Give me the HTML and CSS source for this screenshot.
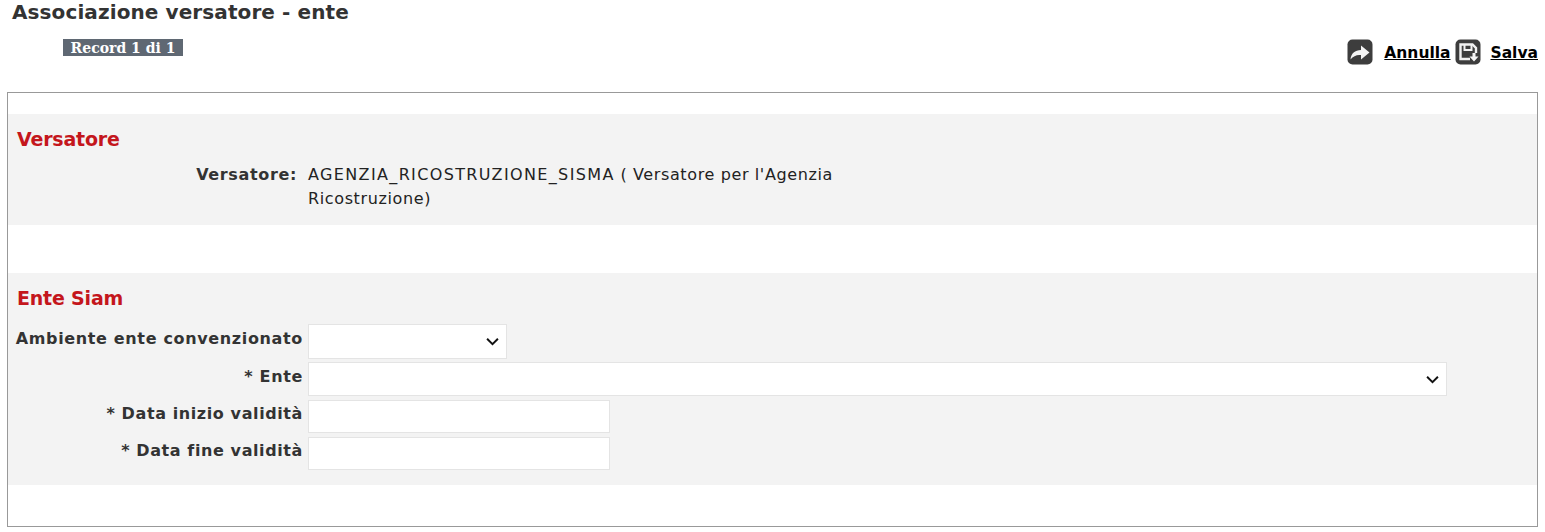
FILE: index.html
```html
<!DOCTYPE html>
<html lang="it">
<head>
<meta charset="utf-8">
<title>Associazione versatore - ente</title>
<link rel="stylesheet" href="styles.css">
</head>
<body>
<header class="top">
  <h1 class="title">Associazione versatore - ente</h1>
  <div class="bar">
    <span class="badge">Record 1 di 1</span>
    <nav class="actions">
      <svg class="icon" viewBox="0 0 26 26" aria-hidden="true"><rect x="0.5" y="0.5" width="25" height="25" rx="5" fill="#3d3d3d"/><path d="M3.5 20.5c.5-6 4.500-9.500 10.500-9.500V6.500l8.500 7-8.500 7V16c-4.500-.5-7.500 1-10.500 4.500z" fill="#f4f4f4"/></svg>
      <a class="link link-first" href="#">Annulla</a>
      <svg class="icon" viewBox="0 0 26 26" aria-hidden="true"><rect x="0.5" y="0.5" width="25" height="25" rx="5" fill="#3d3d3d"/><path d="M15 20H5.500V5.500h12l3.500 3.500v5" fill="none" stroke="#f1f1f1" stroke-width="2.400"/><path d="M9.500 5.500v5.500h7V5.500" fill="none" stroke="#f1f1f1" stroke-width="2"/><path d="M17.500 14h3v3.500H23.500l-4.500 5-4.500-5h3z" fill="#f4f4f4"/></svg>
      <a class="link" href="#">Salva</a>
    </nav>
  </div>
</header>
<main class="panel">
  <section class="group group-one">
    <h2 class="group-title">Versatore</h2>
    <div class="info">
      <span class="info-label">Versatore:</span>
      <span class="info-value"><span class="code">AGENZIA_RICOSTRUZIONE_SISMA</span> ( Versatore per l'Agenzia Ricostruzione)</span>
    </div>
  </section>
  <section class="group group-two">
    <h2 class="group-title">Ente Siam</h2>
    <div class="row row-first">
      <label class="label label-low">Ambiente ente convenzionato</label>
      <div class="field select-short"><svg class="chev" viewBox="0 0 12 8" aria-hidden="true"><path d="M1 1.500l5 5 5-5" fill="none" stroke="#111" stroke-width="1.800"/></svg></div>
    </div>
    <div class="row row-second">
      <label class="label label-low">* Ente</label>
      <div class="field select-long"><svg class="chev" viewBox="0 0 12 8" aria-hidden="true"><path d="M1 1.500l5 5 5-5" fill="none" stroke="#111" stroke-width="1.800"/></svg></div>
    </div>
    <div class="row row-third">
      <label class="label label-tight">* Data inizio validità</label>
      <div class="field date"></div>
    </div>
    <div class="row row-fourth">
      <label class="label label-tight">* Data fine validità</label>
      <div class="field date"></div>
    </div>
  </section>
</main>
</body>
</html>
```
FILE: styles.css
```css
* { box-sizing: border-box; }
html, body { margin: 0; padding: 0; background: #fff; }
body { font-family: "DejaVu Sans", Verdana, sans-serif; color: #333; overflow: hidden; }
.top { height: 92px; padding: 0 7px 0 12px; }
.title { margin: 0; font-size: 20px; line-height: 24px; font-weight: 700; letter-spacing: 0.1px; color: #333; }
.bar { display: flex; justify-content: space-between; padding-left: 51px; }
.badge { align-self: flex-start; margin-top: 15px; width: 120px; height: 17px; line-height: 18px; text-align: center; background: #5f6873; color: #fff; font-family: "DejaVu Serif", serif; font-weight: 700; font-size: 14px; }
.actions { display: flex; align-items: center; margin-top: 15px; height: 26px; }
.icon { width: 26px; height: 26px; display: block; }
.link { color: #000; font-size: 15.5px; font-weight: 700; text-decoration: underline; margin-left: 10px; position: relative; top: 1px; }
.link-first { margin-left: 11px; margin-right: 4px; }
.panel { margin-left: 7px; width: 1531px; height: 435px; border: 1px solid #999; padding-top: 21px; }
.group { background: #f3f3f3; }
.group-one { height: 111px; margin-bottom: 48px; }
.group-two { height: 212px; }
.group-title { margin: 0; padding: 14px 0 0 9px; font-size: 19px; line-height: 22px; font-weight: 700; letter-spacing: -0.2px; color: #c4161c; }
.info { display: flex; margin-top: 13px; }
.info-label { width: 289px; text-align: right; font-size: 16px; line-height: 24px; font-weight: 700; letter-spacing: 0.65px; }
.info-value { width: 540px; margin-left: 11px; font-size: 16px; line-height: 24px; letter-spacing: 0.62px; color: #222; }
.code { letter-spacing: 1.36px; }
.row { display: flex; }
.row-first { margin-top: 15px; }
.row-second { margin-top: 3px; }
.row-third { margin-top: 4px; }
.row-fourth { margin-top: 4px; }
.label { width: 295px; text-align: right; font-size: 16px; line-height: 18px; font-weight: 700; letter-spacing: 0.65px; padding-top: 5px; white-space: nowrap; }
.label-low { padding-top: 6px; }
.label-tight { letter-spacing: 0.6px; }
.field { margin-left: 5px; background: #fff; border: 1px solid #e4e4e4; display: flex; align-items: center; justify-content: flex-end; padding-right: 7px; }
.chev { width: 13px; height: 9px; display: block; }
.select-short { width: 199px; height: 35px; }
.select-long { width: 1139px; height: 34px; }
.date { width: 302px; height: 33px; }
```
